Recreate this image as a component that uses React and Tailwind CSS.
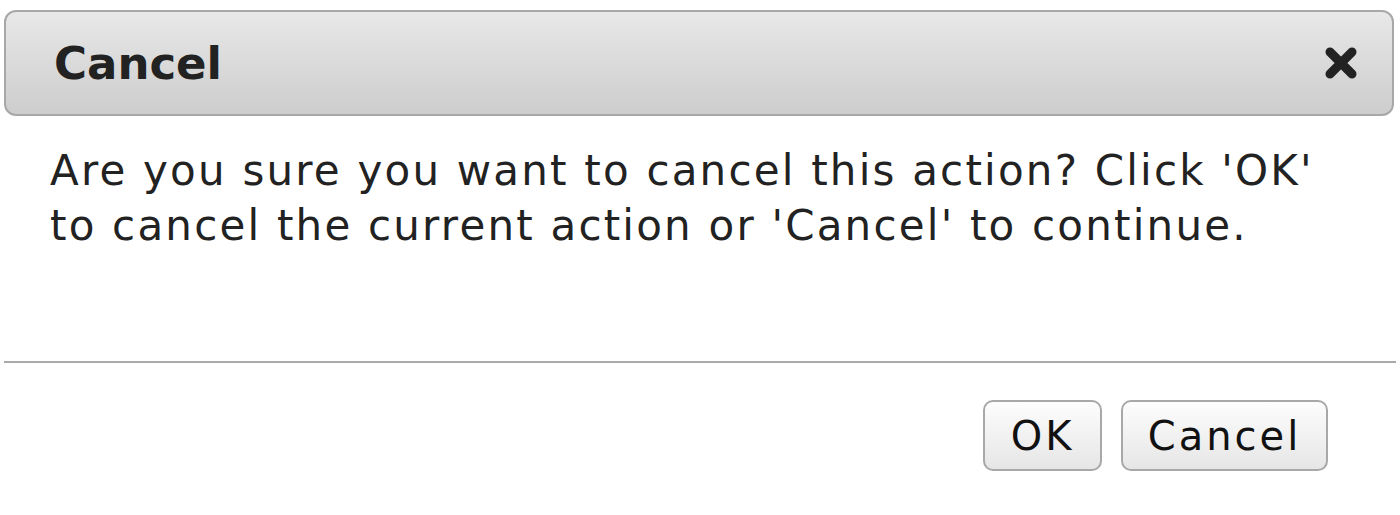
export default function App() {
  return (
    <div className="w-[1400px] h-[515px] bg-white font-['DejaVu_Sans',Verdana,sans-serif] text-[#222] overflow-hidden">
      <div className="pt-[10px] pl-[4px] pr-[6px]">
        <div className="h-[106px] rounded-[12px] border-2 border-[#a8a8a8] bg-gradient-to-b from-[#e8e8e8] to-[#cdcdcd] flex items-center justify-between pl-[48px] pr-[34px]">
          <span className="text-[45px] font-bold leading-none">Cancel</span>
          <svg width="34" height="34" viewBox="0 0 34 34">
            <path d="M6 6 L28 28 M28 6 L6 28" stroke="#222" strokeWidth="9" strokeLinecap="round" />
          </svg>
        </div>
      </div>
      <div className="pl-[50px] pr-[20px] pt-[27px] h-[245px] text-[42px] leading-[55px] tracking-[2.2px]">
        <p>Are you sure you want to cancel this action? Click 'OK'</p>
        <p>to cancel the current action or 'Cancel' to continue.</p>
      </div>
      <div className="mx-[4px] h-[2px] bg-[#aaaaaa]" />
      <div className="flex justify-end gap-[19px] pr-[72px] pt-[37px]">
        <button className="h-[71px] w-[119px] rounded-[10px] border-2 border-[#a8a8a8] bg-gradient-to-b from-[#fdfdfd] to-[#e6e6e6] text-[40px] tracking-[3px] text-[#111] leading-none">
          OK
        </button>
        <button className="h-[71px] w-[207px] rounded-[10px] border-2 border-[#a8a8a8] bg-gradient-to-b from-[#fdfdfd] to-[#e6e6e6] text-[40px] tracking-[3px] text-[#111] leading-none">
          Cancel
        </button>
      </div>
    </div>
  );
}
